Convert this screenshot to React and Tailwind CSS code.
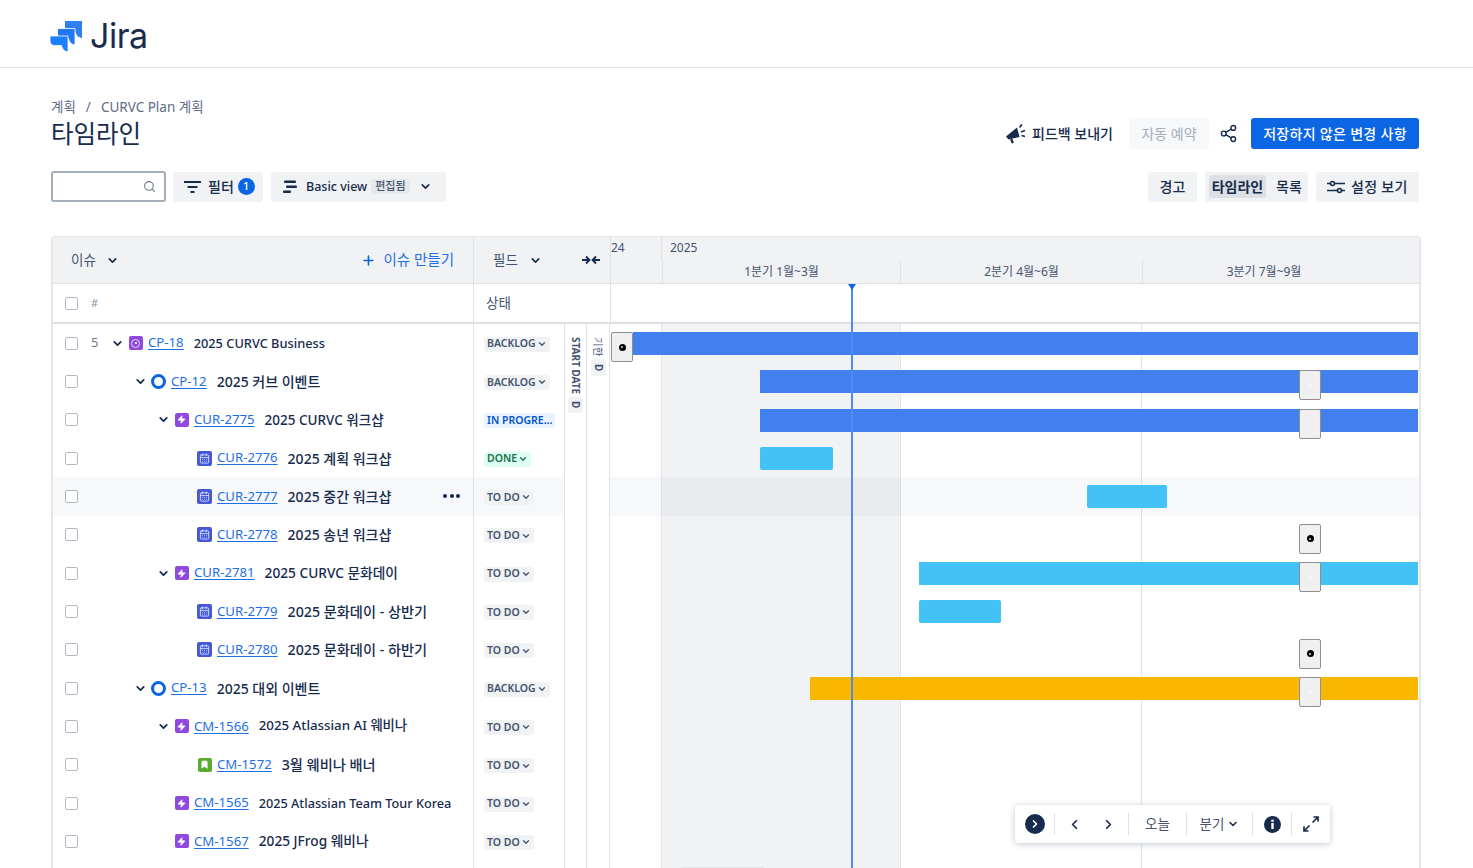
import React from "react";
import { ChevronDown, ChevronLeft, ChevronRight, Search, Plus, Zap, Bookmark, CalendarDays, Share2 } from "lucide-react";

const rows = [
  { level: 0, num: "5", chevron: true, type: "goal", id: "CP-18", title: "2025 CURVC Business", size: "text-[12.800px]", status: "BACKLOG" },
  { level: 1, chevron: true, type: "ring", id: "CP-12", title: "2025 커브 이벤트", size: "text-[14px]", status: "BACKLOG" },
  { level: 2, chevron: true, type: "epic", id: "CUR-2775", title: "2025 CURVC 워크샵", size: "text-[13.500px]", status: "IN PROGRE..." },
  { level: 3, type: "cal", id: "CUR-2776", title: "2025 계획 워크샵", size: "text-[14px]", status: "DONE" },
  { level: 3, type: "cal", id: "CUR-2777", title: "2025 중간 워크샵", size: "text-[14px]", status: "TO DO", hover: true },
  { level: 3, type: "cal", id: "CUR-2778", title: "2025 송년 워크샵", size: "text-[14px]", status: "TO DO" },
  { level: 2, chevron: true, type: "epic", id: "CUR-2781", title: "2025 CURVC 문화데이", size: "text-[13.700px]", status: "TO DO" },
  { level: 3, type: "cal", id: "CUR-2779", title: "2025 문화데이 - 상반기", size: "text-[14.200px]", status: "TO DO" },
  { level: 3, type: "cal", id: "CUR-2780", title: "2025 문화데이 - 하반기", size: "text-[14.200px]", status: "TO DO" },
  { level: 1, chevron: true, type: "ring", id: "CP-13", title: "2025 대외 이벤트", size: "text-[14px]", status: "BACKLOG" },
  { level: 2, chevron: true, type: "epic", id: "CM-1566", title: "2025 Atlassian AI 웨비나", size: "text-[13.300px]", status: "TO DO" },
  { level: 3, type: "story", id: "CM-1572", title: "3월 웨비나 배너", size: "text-[14.200px]", status: "TO DO" },
  { level: 2, type: "epic", id: "CM-1565", title: "2025 Atlassian Team Tour Korea", size: "text-[12.700px]", status: "TO DO" },
  { level: 2, type: "epic", id: "CM-1567", title: "2025 JFrog 웨비나", size: "text-[13.700px]", status: "TO DO" },
];

// x는 차트 왼쪽(610px) 기준
const bars = [
  { from: 23, to: 808, color: "#4280f0" },
  { from: 150, to: 808, color: "#4280f0", handle: 689 },
  { from: 150, to: 808, color: "#4280f0", handle: 689 },
  { from: 150, to: 223, color: "#43c2f5" },
  { from: 477, to: 557, color: "#43c2f5" },
  { dot: 689 },
  { from: 309, to: 808, color: "#43c2f5", handle: 689 },
  { from: 309, to: 391, color: "#43c2f5" },
  { dot: 689 },
  { from: 200, to: 808, color: "#f9b700", handle: 689 },
  {},
  {},
  {},
  {},
];

const pill = {
  BACKLOG: "bg-[#f1f2f4] text-[#44546f]",
  "TO DO": "bg-[#f1f2f4] text-[#44546f]",
  DONE: "bg-[#dcfff1] text-[#216e4e]",
  "IN PROGRE...": "bg-[#e9f2ff] text-[#0055cc]",
};

function JiraLogo() {
  return (
    <svg width="33" height="31" viewBox="0 0 33 31">
      <path d="M15 0h17v17c-3.500-.5-6-3-6.500-6.500H19c-2 0-4-2-4-4.500z" fill="#2f7ff0" />
      <path d="M7.500 7.500h17.500v16.500c-3.500-.5-6-3-6.500-6.500H12c-2.500 0-4.500-2-4.500-4.500z" fill="#1f78f5" stroke="white" strokeWidth="0.800" />
      <path d="M0 15h18v16c-3.500-.5-6-3-6.500-6.500H4.500C2 24.500 0 22.500 0 20z" fill="#1a80ff" stroke="white" strokeWidth="0.800" />
    </svg>
  );
}

function FilterIcon() {
  return (
    <svg width="17" height="12" viewBox="0 0 17 12" fill="none" stroke="#172b4d" strokeWidth="2">
      <path d="M0 1h17M3.500 6h10M6.500 11h4" />
    </svg>
  );
}

function MegaphoneIcon() {
  return (
    <svg width="20" height="20" viewBox="0 0 20 20" fill="#172b4d">
      <path d="M0 12.500 11 3.500l2.500 9.500L2.500 15.500z" />
      <path d="M4 15.500l2.500-.7 1.300 4-2 .7z" />
      <path d="M13.500 3.500 16 0.500M15 8l4-1.500M15.500 11.500l3.500 1" stroke="#172b4d" strokeWidth="1.700" fill="none" />
    </svg>
  );
}

function BasicViewIcon() {
  return (
    <svg width="15" height="14" viewBox="0 0 15 14" fill="#172b4d">
      <rect x="1" y="0.500" width="12" height="2.500" rx="1" />
      <rect x="3" y="5.500" width="11" height="2.500" rx="1" />
      <rect x="0" y="10.500" width="8" height="2.500" rx="1" />
    </svg>
  );
}

function SlidersIcon() {
  return (
    <svg width="18" height="14" viewBox="0 0 18 14" fill="none" stroke="#172b4d" strokeWidth="1.600">
      <path d="M0 3.500h3M8 3.500h10M0 10.500h10M15 10.500h3" />
      <circle cx="5.500" cy="3.500" r="2" />
      <circle cx="12.500" cy="10.500" r="2" />
    </svg>
  );
}

function CollapseIcon() {
  return (
    <svg width="18" height="10" viewBox="0 0 18 10" fill="none" stroke="#172b4d" strokeWidth="1.800">
      <path d="M0 5h7M4 1.500 7.500 5 4 8.500M18 5h-7M14 1.500 10.500 5 14 8.500" />
    </svg>
  );
}

function ExpandIcon() {
  return (
    <svg width="16" height="16" viewBox="0 0 16 16" fill="none" stroke="#172b4d" strokeWidth="1.700">
      <path d="M9.500 6.500 15 1M10.500 1H15v4.500M6.500 9.500 1 15M1 10.500V15h4.500" />
    </svg>
  );
}

function InfoIcon() {
  return (
    <svg width="17" height="17" viewBox="0 0 17 17">
      <circle cx="8.500" cy="8.500" r="8.500" fill="#172b4d" />
      <rect x="7.300" y="7" width="2.400" height="6" fill="white" />
      <rect x="7.300" y="3.600" width="2.400" height="2.300" fill="white" />
    </svg>
  );
}

function IssueIcon({ type }) {
  if (type === "ring") return <div className="w-[15px] h-[15px] rounded-full border-[3.500px] border-[#0c66e4]" />;
  if (type === "goal")
    return (
      <div className="w-[14px] h-[14px] rounded-[2px] bg-[#8f49de] flex items-center justify-center">
        <div className="w-[9px] h-[9px] rounded-full border-[1.500px] border-[#e9d8fb] flex items-center justify-center">
          <div className="w-[2px] h-[2px] bg-white rounded-full" />
        </div>
      </div>
    );
  if (type === "epic")
    return (
      <div className="w-[14px] h-[14px] rounded-[2px] bg-[#8f49de] flex items-center justify-center">
        <Zap size={9} fill="white" stroke="white" />
      </div>
    );
  if (type === "story")
    return (
      <div className="w-[14px] h-[14px] rounded-[2px] bg-[#5aac2f] flex items-center justify-center">
        <Bookmark size={9} fill="white" stroke="white" />
      </div>
    );
  return (
    <div className="w-[15px] h-[15px] rounded-[2px] bg-[#4658d6] flex items-center justify-center">
      <CalendarDays size={11} stroke="#dfe4ff" strokeWidth={1.800} />
    </div>
  );
}

function Checkbox() {
  return <div className="w-[13px] h-[13px] rounded-[2px] border-[1.500px] border-[#b3b9c4] bg-white" />;
}

function Button({ children, className = "" }) {
  return (
    <div className={"h-[30px] rounded-[3px] bg-[#f1f2f4] flex items-center text-[#172b4d] text-[14px] font-medium " + className}>
      {children}
    </div>
  );
}

function Handle({ x, dot, top }) {
  return (
    <div
      className="absolute w-[22px] h-[30px] rounded-[2px] bg-[#f0f0f0] border border-[#8f8f8f] flex items-center justify-center"
      style={{ left: x, top }}
    >
      {dot ? (
        <div className="w-[7px] h-[7px] rounded-full bg-black flex items-center justify-center">
          <div className="w-[2px] h-[2px] rounded-full bg-[#ddd]" />
        </div>
      ) : (
        <div className="w-[2px] h-[2px] rounded-full bg-white" />
      )}
    </div>
  );
}

function IssueRow({ row }) {
  return (
    <div className={"h-[38.33px] flex items-center relative " + (row.hover ? "bg-[#f7f8f9]" : "")}>
      <div className="ml-[12px] w-[13px]">
        <Checkbox />
      </div>
      <div className="ml-[13px] w-[9px] text-[13px] text-[#6b778c]">{row.num}</div>
      <div style={{ width: 13 + row.level * 23 }} />
      <div className="w-[15px] flex items-center justify-center -ml-[3px]">
        {row.chevron && <ChevronDown size={13} strokeWidth={3.200} className="text-[#172b4d]" />}
      </div>
      <div className="ml-[3px] w-[15px] flex items-center justify-center">
        <IssueIcon type={row.type} />
      </div>
      <a className="ml-[5px] text-[13.200px] text-[#1f6fe5] underline underline-offset-2 whitespace-nowrap">{row.id}</a>
      <span className={"ml-[10px] font-medium text-[#172b4d] whitespace-nowrap " + row.size}>{row.title}</span>
      {row.hover && (
        <div className="absolute left-[390px] top-[17px] flex gap-[2.500px]">
          <div className="w-[4px] h-[4px] rounded-full bg-[#172b4d]" />
          <div className="w-[4px] h-[4px] rounded-full bg-[#172b4d]" />
          <div className="w-[4px] h-[4px] rounded-full bg-[#172b4d]" />
        </div>
      )}
    </div>
  );
}

function StatusCell({ row }) {
  return (
    <div className={"h-[38.33px] flex items-center pl-[10px] pt-[2px] " + (row.hover ? "bg-[#f7f8f9]" : "")}>
      <div className={"h-[15px] px-[3px] rounded-[3px] flex items-center text-[10.500px] font-semibold whitespace-nowrap " + pill[row.status]}>
        {row.status}
        {row.status !== "IN PROGRE..." && <ChevronDown size={10} strokeWidth={3} className="ml-[1px]" />}
      </div>
    </div>
  );
}

function TimelineRow({ bar, hover }) {
  return (
    <div className={"h-[38.33px] relative " + (hover ? "bg-[#172b4d]/[0.035]" : "")}>
      {bar.from !== undefined && (
        <div
          className={"absolute top-[8px] h-[23px] " + (bar.color === "#43c2f5" && bar.to < 700 ? "rounded-[2px]" : "")}
          style={{ left: bar.from, width: bar.to - bar.from, background: bar.color }}
        />
      )}
      {bar.handle && <Handle x={bar.handle} top={8} />}
      {bar.dot && <Handle x={bar.dot} dot top={8} />}
    </div>
  );
}

export default function App() {
  return (
    <div className="w-[1473px] h-[868px] overflow-hidden bg-white text-[#172b4d] font-['Noto_Sans','Noto_Sans_CJK_KR',sans-serif]">
      <header className="h-[68px] border-b border-[#dfe1e6] flex items-center pl-[50px] pt-[5px]">
        <JiraLogo />
        <span className="ml-[7px] text-[34px] leading-none text-[#1b2b4b] font-normal font-['Inter',sans-serif] tracking-[-0.5px]">Jira</span>
      </header>

      <main className="px-[51px]">
        <div className="flex justify-between items-end pt-[28px]">
          <div>
            <div className="text-[13.500px] text-[#5e6c84] leading-[22px] flex gap-[10px]">
              <span>계획</span>
              <span>/</span>
              <span>CURVC Plan 계획</span>
            </div>
            <h1 className="text-[24.500px] leading-[32px] font-normal">타임라인</h1>
          </div>
          <div className="flex items-center mr-[3px] mb-[1px]">
            <MegaphoneIcon />
            <span className="ml-[6px] text-[14px] font-medium">피드백 보내기</span>
            <div className="ml-[16px] w-[80px] h-[31px] bg-[#f7f8f9] rounded-[3px] text-[14px] text-[#a5adba] flex items-center justify-center">
              자동 예약
            </div>
            <Share2 size={19} strokeWidth={1.800} className="ml-[10px] text-[#172b4d]" />
            <div className="ml-[13px] w-[168px] h-[31px] bg-[#0c66e4] rounded-[3px] text-[14px] tracking-[0.3px] font-medium text-white flex items-center justify-center">
              저장하지 않은 변경 사항
            </div>
          </div>
        </div>

        <div className="flex justify-between items-center mt-[21px] mr-[3px]">
          <div className="flex items-center gap-[7px]">
            <div className="w-[115px] h-[31px] border-2 border-[#a5adba] rounded-[3px] flex items-center justify-end pr-[8px]">
              <Search size={13} className="text-[#6b778c]" />
            </div>
            <Button className="w-[90px] pl-[11px]">
              <FilterIcon />
              <span className="ml-[7px]">필터</span>
              <span className="ml-[4px] w-[17px] h-[17px] rounded-full bg-[#0c66e4] text-white text-[11px] flex items-center justify-center">1</span>
            </Button>
            <Button className="ml-[1px] w-[175px] pl-[12px]">
              <BasicViewIcon />
              <span className="ml-[8px] mt-[2px] text-[12.500px]">Basic view</span>
              <span className="ml-[4px] h-[15px] px-[4px] rounded-[3px] bg-[#e6e8ec] text-[11px] text-[#44546f] flex items-center">편집됨</span>
              <ChevronDown size={13} strokeWidth={3} className="ml-[9px]" />
            </Button>
          </div>
          <div className="flex items-center gap-[8px]">
            <Button className="w-[49px] justify-center">경고</Button>
            <Button className="w-[103px] px-[4px] text-[11.500px] font-semibold">
              <span className="w-[57px] h-[23px] rounded-[3px] bg-[#dcdfe4] flex items-center justify-center">타임라인</span>
              <span className="ml-[10px] font-medium">목록</span>
            </Button>
            <Button className="w-[103px] pl-[11px]">
              <SlidersIcon />
              <span className="ml-[6px] tracking-[0.3px]">설정 보기</span>
            </Button>
          </div>
        </div>

        <section className="mt-[34px] w-[1370px] rounded-t-[4px] border-x-2 border-t border-[#e4e6ea]">
          <div className="flex h-[47px] bg-[#f1f2f4] border-b border-[#dfe1e6]">
            <div className="w-[421px] border-r border-[#dfe1e6] flex items-center pl-[18px] pr-[19px] text-[13.500px] text-[#44546f]">
              <span>이슈</span>
              <ChevronDown size={13} strokeWidth={3} className="ml-[10px] text-[#172b4d]" />
              <Plus size={15} strokeWidth={2.600} className="ml-auto text-[#0c66e4]" />
              <span className="ml-[8px] text-[14.500px] text-[#1f6fe5]">이슈 만들기</span>
            </div>
            <div className="w-[137px] border-r border-[#dfe1e6] flex items-center pl-[19px] pr-[10px] text-[13.500px] text-[#44546f]">
              <span>필드</span>
              <ChevronDown size={13} strokeWidth={3} className="ml-[11px] text-[#172b4d]" />
              <span className="ml-auto">
                <CollapseIcon />
              </span>
            </div>
            <div className="flex-1 flex flex-col text-[12px] text-[#44546f]">
              <div className="h-[24px] flex">
                <div className="w-[51px] border-r border-[#dfe1e6] leading-[22px]">24</div>
                <div className="pl-[8px] leading-[22px]">2025</div>
              </div>
              <div className="flex-1 flex pl-[51px]">
                <div className="w-[239px] text-center border-x border-[#dfe1e6] leading-[23px]">1분기 1월~3월</div>
                <div className="w-[242px] text-center border-r border-[#dfe1e6] leading-[23px]">2분기 4월~6월</div>
                <div className="w-[242px] text-center leading-[23px]">3분기 7월~9월</div>
              </div>
            </div>
          </div>

          <div className="flex h-[40px] border-b-2 border-[#dfe1e6]">
            <div className="w-[421px] border-r border-[#dfe1e6] flex items-center pl-[12px]">
              <Checkbox />
              <span className="ml-[13px] text-[11px] text-[#8993a4]">#</span>
            </div>
            <div className="w-[137px] border-r border-[#dfe1e6] flex items-center pl-[12px] text-[13.500px] text-[#44546f]">상태</div>
            <div className="flex-1" />
          </div>

          <div className="flex h-[545px]">
            <div className="w-[421px] border-r border-[#dfe1e6] shrink-0">
              {rows.map((r) => (
                <IssueRow key={r.id} row={r} />
              ))}
            </div>
            <div className="w-[91px] border-r border-[#dfe1e6] shrink-0">
              {rows.map((r) => (
                <StatusCell key={r.id} row={r} />
              ))}
            </div>
            <div className="w-[22px] border-r border-[#dfe1e6] shrink-0 flex flex-col items-center pt-[13px]">
              <span className="[writing-mode:vertical-rl] text-[10px] font-bold text-[#44546f] whitespace-nowrap leading-none">START DATE</span>
              <span className="mt-[3px] w-[15px] h-[16px] rounded-[3px] bg-[#f1f2f4] flex items-center justify-center [writing-mode:vertical-rl] text-[10px] font-bold text-[#44546f]">D</span>
            </div>
            <div className="w-[23px] border-r border-[#dfe1e6] shrink-0 flex flex-col items-center pt-[13px]">
              <span className="[writing-mode:vertical-rl] [text-orientation:sideways] text-[10.500px] text-[#44546f] whitespace-nowrap leading-none">기한</span>
              <span className="mt-[3px] w-[15px] h-[17px] rounded-[3px] bg-[#f1f2f4] flex items-center justify-center [writing-mode:vertical-rl] text-[10px] font-bold text-[#44546f]">D</span>
            </div>
            <div className="flex-1 relative">
              <div className="absolute left-[51px] top-0 bottom-0 w-[240px] bg-[#f1f2f4] border-x border-[#e2e4e9]" />
              <div className="absolute left-[531px] top-0 bottom-0 w-px bg-[#e2e4e9]" />
              <div className="relative">
                {rows.map((r, i) => (
                  <TimelineRow key={r.id} bar={bars[i]} hover={r.hover} />
                ))}
              </div>
              <Handle x={1} dot top={8} />
              <div className="absolute left-[241px] -top-[40px] bottom-0 w-[2px] bg-[#4b8cf5]" />
              <div className="absolute left-[238px] -top-[40px] w-0 h-0 border-x-[4px] border-t-[6px] border-x-transparent border-t-[#0c66e4]" />
              <div className="absolute left-[72px] bottom-[0px] w-[82px] h-[2px] bg-[#e4e6ea]" />

              <div className="absolute left-[405px] top-[481px] w-[315px] h-[38px] bg-white rounded-[3px] shadow-[0_1px_6px_rgba(9,30,66,0.25)] flex items-center text-[13.500px] text-[#44546f]">
                <div className="w-[39px] flex justify-center">
                  <div className="w-[20px] h-[20px] rounded-full bg-[#172b4d] flex items-center justify-center">
                    <ChevronRight size={12} strokeWidth={3.500} className="text-white" />
                  </div>
                </div>
                <div className="w-px h-[22px] bg-[#dfe1e6]" />
                <div className="w-[73px] flex justify-center gap-[19px] text-[#172b4d]">
                  <ChevronLeft size={15} strokeWidth={2.800} />
                  <ChevronRight size={15} strokeWidth={2.800} />
                </div>
                <div className="w-px h-[22px] bg-[#dfe1e6]" />
                <div className="w-[57px] text-center">오늘</div>
                <div className="w-px h-[22px] bg-[#dfe1e6]" />
                <div className="w-[65px] flex items-center justify-center gap-[3px]">
                  분기
                  <ChevronDown size={12} strokeWidth={3} className="text-[#172b4d]" />
                </div>
                <div className="w-px h-[22px] bg-[#dfe1e6]" />
                <div className="w-[38px] flex justify-center">
                  <InfoIcon />
                </div>
                <div className="w-px h-[22px] bg-[#dfe1e6]" />
                <div className="flex-1 flex justify-center">
                  <ExpandIcon />
                </div>
              </div>
            </div>
          </div>
        </section>
      </main>
    </div>
  );
}
